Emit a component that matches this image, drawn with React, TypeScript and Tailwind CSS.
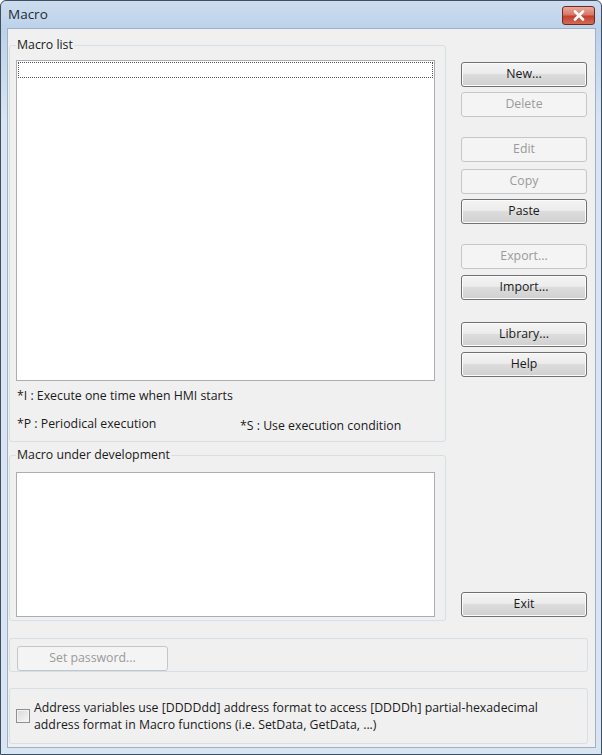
import React from "react";

const FONT = "font-['Segoe_UI','Open_Sans','Noto_Sans',sans-serif]";

type BtnProps = { label: string; disabled?: boolean; className?: string };

const WinButton: React.FC<BtnProps> = ({ label, disabled, className }) => (
    <button
        className={
            "h-[25px] rounded-[3px] border text-[12.3px] leading-none " +
            (disabled
                ? "border-[#c3c7ca] bg-[#f4f4f4] text-[#9a9a9a] "
                : "border-[#707070] bg-[linear-gradient(#f4f4f4_0%,#ececec_45%,#dcdcdc_50%,#d0d0d0_100%)] text-[#1a1a1a] shadow-[inset_0_0_0_1px_#fcfcfc] ") +
            (className ?? "")
        }
    >
        {label}
    </button>
);

const GroupBox: React.FC<{ title?: string; className?: string; children: React.ReactNode }> = ({ title, className, children }) => (
    <fieldset className={"border border-[#d5dfe5] rounded-[3px] " + (className ?? "")}>
        {title && <legend className="px-[1px] text-[12.3px] leading-[18px] text-[#1a1a1a]">{title}</legend>}
        {children}
    </fieldset>
);

export default function App() {
    return (
        <div className={"w-[602px] h-[755px] flex flex-col border border-[#3f4f60] rounded-t-[6px] bg-[linear-gradient(180deg,#cddcee_0px,#bcd2ea_28px,#d9e5f2_120px,#d9e5f2_100%)] " + FONT}>
            {/* title bar */}
            <div className="h-[27px] flex items-center justify-between pl-[7px] pr-[6px]">
                <span className="text-[13.5px] text-[#1e2a36] pb-[1px]">Macro</span>
                <div className="w-[33px] h-[19px] mt-[2px] rounded-[3px] border border-[#6b2a22] bg-[linear-gradient(#e9a99b_0%,#d8776a_45%,#c2412f_55%,#d46a55_100%)] flex items-center justify-center">
                    <svg width="12" height="11" viewBox="0 0 12 11">
                        <path d="M2 1.5 L10 9.5 M10 1.5 L2 9.5" stroke="#ffffff" strokeWidth="2.6" strokeLinecap="round" />
                    </svg>
                </div>
            </div>

            {/* client area */}
            <div className="flex-1 ml-[6px] mr-[5px] mb-[6px] bg-[#f0f0f0] border border-[#9fb0c2] flex flex-col pl-[1px] pr-[7px] pt-[7px]">
                <div className="flex flex-row gap-[15px]">
                    <div className="w-[437px] flex flex-col gap-[4px]">
                        <GroupBox title="Macro list" className="h-[406px] px-[6px]">
                            <div className="mt-[6px] w-[419px] h-[321px] bg-white border border-[#abadb3] p-[1px]">
                                <div className="h-[16px] border border-dotted border-[#555]" />
                            </div>
                            <div className="mt-[6px] text-[12.3px] leading-[18px] text-[#1a1a1a] pl-[1px]">*I : Execute one time when HMI starts</div>
                            <div className="mt-[10px] flex flex-row text-[12.3px] leading-[18px] text-[#1a1a1a] pl-[1px]">
                                <span className="w-[223px]">*P : Periodical execution</span>
                                <span className="mt-[2px]">*S : Use execution condition</span>
                            </div>
                        </GroupBox>
                        <GroupBox title="Macro under development" className="h-[175px] px-[6px]">
                            <div className="mt-[8px] w-[419px] h-[145px] bg-white border border-[#abadb3]" />
                        </GroupBox>
                    </div>

                    <div className="w-[126px] flex flex-col pt-[26px]">
                        <WinButton label="New..." />
                        <WinButton label="Delete" disabled className="mt-[5px]" />
                        <WinButton label="Edit" disabled className="mt-[20px]" />
                        <WinButton label="Copy" disabled className="mt-[7px]" />
                        <WinButton label="Paste" className="mt-[5px]" />
                        <WinButton label="Export..." disabled className="mt-[20px]" />
                        <WinButton label="Import..." className="mt-[6px]" />
                        <WinButton label="Library..." className="mt-[22px]" />
                        <WinButton label="Help" className="mt-[5px]" />
                        <WinButton label="Exit" className="mt-[215px]" />
                    </div>
                </div>

                <GroupBox className="mt-[17px] h-[34px] px-[7px] pt-[5px]">
                    <WinButton label="Set password..." disabled className="w-[151px] h-[24px]" />
                </GroupBox>

                <GroupBox className="mt-[16px] h-[56px] px-[6px] pt-[10px]">
                    <div className="flex flex-row items-center gap-[4px]">
                        <div className="w-[14px] h-[14px] border border-[#8f8f8f] bg-[linear-gradient(135deg,#d8d8d8,#f8f8f8)] shadow-[inset_0_0_0_1px_#f4f4f4] shrink-0" />
                        <div className="text-[12.3px] leading-[17px] text-[#1a1a1a]">
                            Address variables use [DDDDdd] address format to access [DDDDh] partial-hexadecimal
                            <br />
                            address format in Macro functions (i.e. SetData, GetData, ...)
                        </div>
                    </div>
                </GroupBox>
            </div>
        </div>
    );
}
